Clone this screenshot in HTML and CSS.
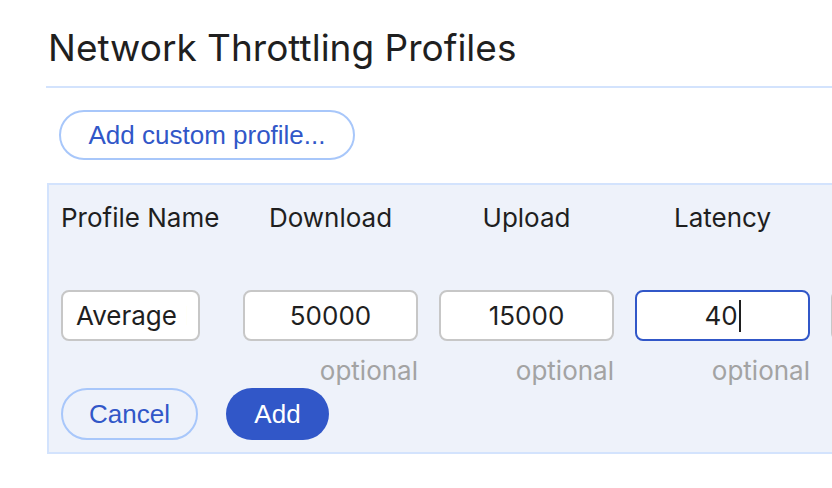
FILE: index.html
```html
<!DOCTYPE html>
<html>
<head>
<meta charset="utf-8">
<link rel="stylesheet" href="styles.css">
</head>
<body>
<div class="page">
  <h1 class="title">Network Throttling Profiles</h1>
  <div class="toolbar">
    <button class="btn btn-outline btn-add-custom">Add custom profile...</button>
  </div>
  <div class="editor">
    <div class="grid">
      <div class="head head-left">Profile Name</div>
      <div class="head">Download</div>
      <div class="head">Upload</div>
      <div class="head">Latency</div>
      <div class="head">Packet Loss</div>

      <div class="field field-name"><span class="field-text">Average Internet</span></div>
      <div class="field"><span class="field-text">50000</span></div>
      <div class="field"><span class="field-text">15000</span></div>
      <div class="field field-focus"><span class="field-text">40<span class="caret"></span></span></div>
      <div class="field"><span class="field-text">0</span></div>

      <div class="hint"></div>
      <div class="hint">optional</div>
      <div class="hint">optional</div>
      <div class="hint">optional</div>
      <div class="hint">optional</div>
    </div>
    <div class="actions">
      <button class="btn btn-outline btn-cancel">Cancel</button>
      <button class="btn btn-primary btn-add">Add</button>
    </div>
  </div>
</div>
</body>
</html>
```
FILE: styles.css
```css
html, body {
  margin: 0;
  padding: 0;
  background: #ffffff;
  overflow: hidden;
}
body {
  width: 832px;
  height: 488px;
  font-family: Inter, "Noto Sans", sans-serif;
  color: #1f1f1f;
}
.page {
  padding-left: 46px;
}
.title {
  margin: 0;
  padding: 26px 0 0 2px;
  box-sizing: border-box;
  font-size: 37px;
  font-weight: 400;
  line-height: 44px;
  border-bottom: 2px solid #d3e3fd;
  width: 900px;
  height: 88px;
}
.toolbar {
  padding: 22px 0 0 13px;
  height: 95px;
  box-sizing: border-box;
}
.btn {
  font-family: "Liberation Sans", Arial, sans-serif;
  font-size: 26px;
  border-radius: 26px;
  cursor: pointer;
  box-sizing: border-box;
  padding: 0;
}
.btn-outline {
  background: transparent;
  border: 2px solid #a8c7fa;
  color: #3157c8;
}
.btn-add-custom {
  width: 296px;
  height: 50px;
}
.editor {
  width: 900px;
  height: 271px;
  box-sizing: border-box;
  background: #eef2fa;
  border: 2px solid #d3e3fd;
  border-right: none;
  margin-left: 1px;
  padding: 16px 0 0 12px;
}
.grid {
  display: grid;
  grid-template-columns: 161px 175px 175px 175px 175px;
  column-gap: 21px;
  grid-template-rows: 34px 55px 51px 45px;
}
.head {
  grid-row: 1;
  font-size: 26px;
  line-height: 34px;
  text-align: center;
  white-space: nowrap;
}
.head-left {
  text-align: left;
}
.field {
  grid-row: 3;
  box-sizing: border-box;
  height: 51px;
  background: #ffffff;
  border: 2px solid #c7c7c7;
  border-radius: 8px;
  font-size: 26px;
  line-height: 47px;
  text-align: center;
  overflow: hidden;
  white-space: nowrap;
}
.field-name {
  width: 139px;
  text-align: left;
  padding: 0 11px 0 13px;
}
.field-name .field-text {
  display: block;
  overflow: hidden;
  word-spacing: 1px;
}
.field-focus {
  border-color: #3157c8;
}
.caret {
  display: inline-block;
  width: 2px;
  height: 32px;
  background: #1f1f1f;
  vertical-align: -7px;
  margin-left: 1px;
}
.hint {
  grid-row: 4;
  font-size: 26px;
  line-height: 30px;
  padding-top: 15px;
  color: #a3a3a3;
  text-align: right;
}
.actions {
  display: flex;
  gap: 28px;
  margin-top: 2px;
}
.btn-cancel {
  width: 137px;
  height: 52px;
}
.btn-primary {
  background: #3157c8;
  border: none;
  color: #ffffff;
}
.btn-add {
  width: 103px;
  height: 52px;
}
```
